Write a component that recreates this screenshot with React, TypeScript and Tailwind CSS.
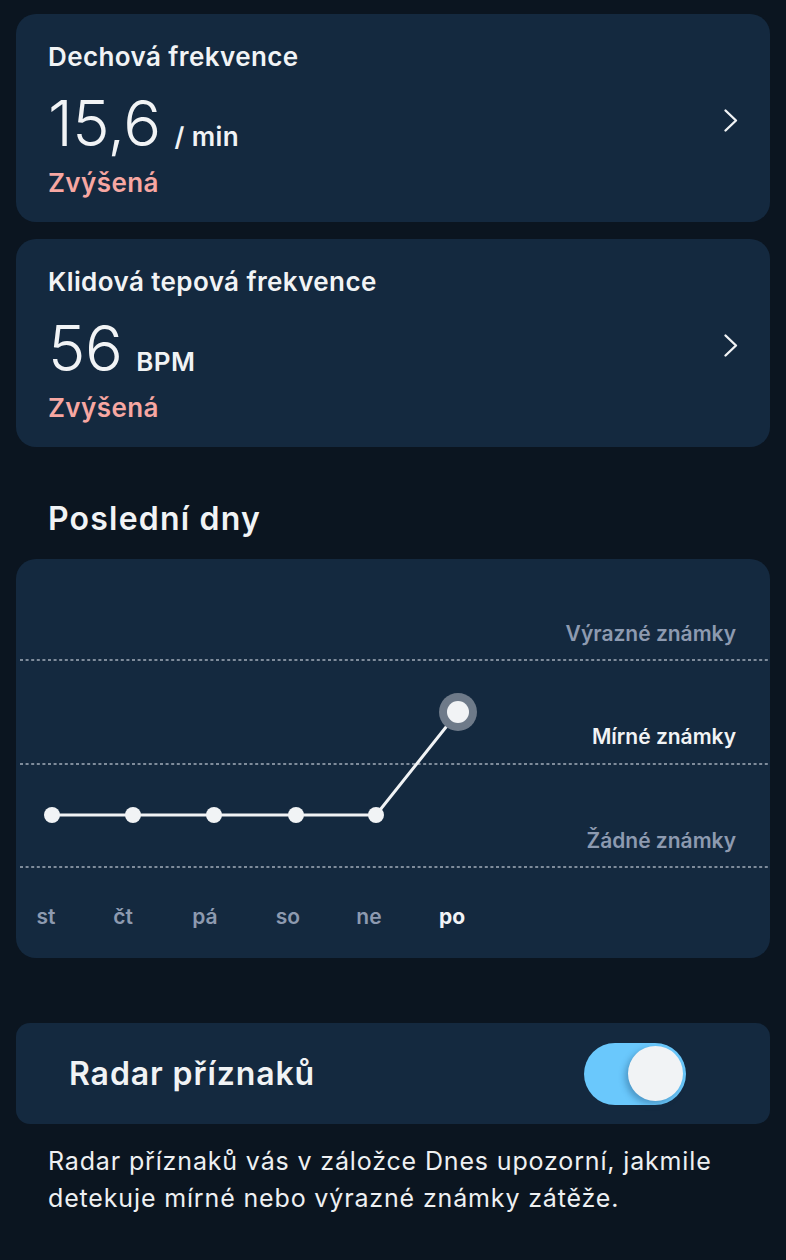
const days = [
  { label: 'st', x: 30 },
  { label: 'čt', x: 107 },
  { label: 'pá', x: 189 },
  { label: 'so', x: 272 },
  { label: 'ne', x: 353 },
  { label: 'po', x: 436, active: true },
];

const points = [
  [36, 256],
  [117, 256],
  [198, 256],
  [280, 256],
  [360, 256],
];

function Chevron() {
  return (
    <svg width="16" height="25" viewBox="0 0 16 25" fill="none">
      <polyline points="2.5,2.5 13,12.5 2.5,22.5" stroke="#f1f3f5" strokeWidth="2.4" strokeLinecap="round" strokeLinejoin="round" />
    </svg>
  );
}

function MetricCard({ title, value, unit }: { title: string; value: string; unit: string }) {
  return (
    <div className="flex items-center justify-between rounded-[20px] bg-[#14293f] pl-8 pr-[31px] pt-[27px] pb-[23px]">
      <div className="flex flex-col">
        <div className="text-[26px] leading-[32px] font-semibold tracking-[0.4px]">{title}</div>
        <div className="mt-[19px] flex items-baseline gap-[14px]">
          <span className="text-[63px] leading-[62px] font-light tracking-[-0.5px]">{value}</span>
          <span className="text-[26px] font-semibold tracking-[0.4px]">{unit}</span>
        </div>
        <div className="mt-[11px] text-[26px] leading-[32px] font-semibold tracking-[0.4px] text-[#f7a7a2]">Zvýšená</div>
      </div>
      <Chevron />
    </div>
  );
}

export default function App() {
  return (
    <div className="min-h-screen bg-[#0b1520] px-4 pt-[14px] pb-10 font-['Inter',sans-serif] text-[#f1f3f5]">
      <div className="flex flex-col gap-[17px]">
        <MetricCard title="Dechová frekvence" value="15,6" unit="/ min" />
        <MetricCard title="Klidová tepová frekvence" value="56" unit="BPM" />
      </div>

      <h2 className="mt-[53px] pl-8 text-[32px] leading-[38px] font-semibold tracking-[1.2px]">Poslední dny</h2>

      {/* Chart */}
      <div className="relative mt-[21px] h-[399px] rounded-[20px] bg-[#14293f]">
        <svg className="absolute inset-0" width="754" height="399" viewBox="0 0 754 399">
          {[101, 205, 308].map((y) => (
            <line key={y} x1="4" x2="754" y1={y} y2={y} stroke="#a3adbb" strokeWidth="1.5" strokeDasharray="3 2.6" />
          ))}
          <polyline
            points={[...points, [442, 153]].map((p) => p.join(',')).join(' ')}
            fill="none"
            stroke="#f1f3f5"
            strokeWidth="3"
          />
          {points.map(([x, y]) => (
            <circle key={x} cx={x} cy={y} r="8" fill="#f1f3f5" />
          ))}
          <circle cx="442" cy="153" r="19" fill="#6e7a89" />
          <circle cx="442" cy="153" r="11" fill="#f1f3f5" />
        </svg>

        <div className="absolute right-[34px] top-[64px] text-[21px] leading-none font-semibold text-[#8d9ab0]">Výrazné známky</div>
        <div className="absolute right-[34px] top-[167px] text-[21px] leading-none font-semibold text-[#f1f3f5]">Mírné známky</div>
        <div className="absolute right-[34px] top-[271px] text-[21px] leading-none font-semibold text-[#8d9ab0]">Žádné známky</div>

        {days.map((d) => (
          <div
            key={d.label}
            className={`absolute top-[347px] -translate-x-1/2 text-[21px] leading-none ${
              d.active ? 'font-bold text-[#f1f3f5]' : 'font-semibold text-[#8d9ab0]'
            }`}
            style={{ left: d.x }}
          >
            {d.label}
          </div>
        ))}
      </div>

      {/* Radar toggle */}
      <div className="mt-[65px] flex h-[101px] items-center justify-between rounded-[14px] bg-[#14293f] pl-[53px] pr-[84px]">
        <span className="text-[32px] font-semibold tracking-[0.9px]">Radar příznaků</span>
        <div className="flex h-[62px] w-[102px] items-center justify-end rounded-full bg-[#6ac8fc] pr-[3px]">
          <div className="h-[55px] w-[55px] rounded-full bg-[#f1f3f5] shadow-[-3px_3px_6px_rgba(20,60,100,0.35)]" />
        </div>
      </div>

      <p className="mt-[19px] pl-8 pr-4 text-[25px] leading-[37px] tracking-[0.85px] text-[#eef0f2]">
        Radar příznaků vás v záložce Dnes upozorní, jakmile detekuje mírné nebo výrazné známky zátěže.
      </p>
    </div>
  );
}
